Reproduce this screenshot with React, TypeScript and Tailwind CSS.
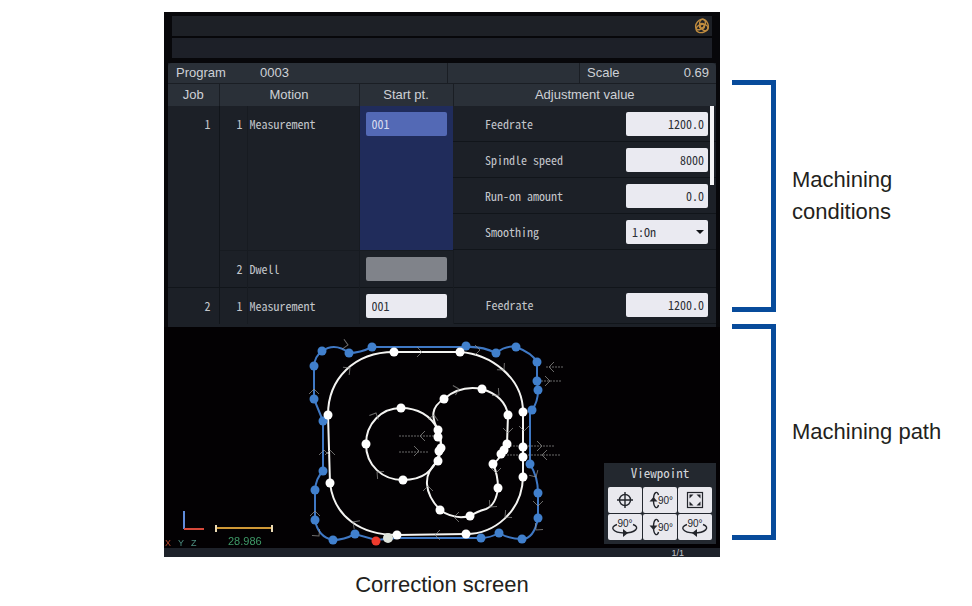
import { useState } from 'react';

interface Adjustment {
    label: string;
    value: string;
    options?: string[];
}

interface ViewButton {
    label: string;
    icon: 'center' | 'pitchUp' | 'fit' | 'yawLeft' | 'pitchDown' | 'yawRight';
}

const ADJUSTMENTS: Adjustment[] = [
    { label: 'Feedrate', value: '1200.0' },
    { label: 'Spindle speed', value: '8000' },
    { label: 'Run-on amount', value: '0.0' },
    { label: 'Smoothing', value: '1:On', options: ['1:On', '0:Off'] },
];

const VIEW_BUTTONS: ViewButton[] = [
    { label: 'Center view', icon: 'center' },
    { label: 'Tilt up', icon: 'pitchUp' },
    { label: 'Fit view', icon: 'fit' },
    { label: 'Turn left', icon: 'yawLeft' },
    { label: 'Tilt down', icon: 'pitchDown' },
    { label: 'Turn right', icon: 'yawRight' },
];

const OUTER_POINTS = [
    [158, 24], [185, 26], [208, 20], [302, 19], [332, 26], [352, 20], [373, 35], [373, 54], [374, 63], [368, 83],
    [366, 137], [374, 166], [374, 191], [358, 212], [335, 206], [317, 211], [191, 207], [169, 213], [151, 193],
    [151, 163], [159, 144], [159, 94], [150, 72], [150, 39],
];

const INNER_POINTS = [
    [230, 25], [296, 25], [359, 85], [359, 120], [359, 130], [359, 150], [302, 207], [233, 208],
    [166, 156], [164, 88], [237, 81], [202, 117], [239, 153], [280, 72], [318, 62], [344, 88], [343, 117],
    [340, 123], [337, 127], [329, 137], [334, 161], [306, 189], [276, 183], [274, 103], [274, 110],
    [277, 121], [275, 124], [274, 134],
];

// x, y, rotation of the travel direction
const ARROWS = [
    [184, 18, 10], [258, 25, 0], [186, 41, -38], [150, 62, -90], [212, 86, -65], [344, 106, 90], [360, 104, 90],
    [316, 23, 0], [295, 62, -15], [335, 68, 40], [340, 43, 48], [160, 123, -90], [166, 123, -90], [213, 145, 220],
    [151, 184, -90], [189, 195, 215], [155, 209, 50], [271, 208, 180], [264, 159, -90], [290, 190, 180],
    [326, 180, 130], [332, 146, 90], [341, 190, 140], [374, 179, 90], [372, 203, 130], [270, 88, -80],
    [372, 150, 60], [256, 109, 180], [255, 124, 0], [385, 40, 180], [386, 54, 0], [378, 119, 0], [378, 128, 180],
];

function ViewIcon({ icon }: { icon: ViewButton['icon'] }) {
    const isPitch = icon === 'pitchUp' || icon === 'pitchDown';
    const isYaw = icon === 'yawLeft' || icon === 'yawRight';

    return (
        <svg viewBox="0 0 32 24" className="h-6 w-full" fill="none" stroke="#22252b" strokeWidth="1.4" aria-hidden="true">
            {icon === 'center' && (
                <>
                    <circle cx="16" cy="12" r="5.5" />
                    <path d="M16 4v16M8 12h16" />
                </>
            )}
            {icon === 'fit' && (
                <>
                    <rect x="8.500" y="4.500" width="15" height="15" strokeWidth="1.2" />
                    <path d="M10.500 6.500h4l-4 4zM21.500 6.500h-4l4 4zM10.500 17.500h4l-4-4zM21.500 17.500h-4l4-4z" fill="#22252b" stroke="none" />
                </>
            )}
            {isPitch && (
                <>
                    <path d="M14.500 7C13.500 2.500 9.500 3.500 9.500 12s4 9.500 5 5" />
                    <path d={icon === 'pitchUp' ? 'M5.500 13.500h8l-4-4.500z' : 'M5.500 10.500h8l-4 4.500z'} fill="#22252b" stroke="none" />
                    <text x="14" y="16" fontSize="10" fill="#22252b" stroke="none" fontFamily="Liberation Sans">
                        90°
                    </text>
                </>
            )}
            {isYaw && (
                <>
                    <path d="M8 9.500C0 12 4 18 15 18s17-5.500 9-8.500" />
                    <path
                        d={icon === 'yawLeft' ? 'M14 14v8l5-4z' : 'M18 14v8l-5-4z'}
                        fill="#22252b"
                        stroke="none"
                    />
                    <text x="16" y="12" textAnchor="middle" fontSize="10" fill="#22252b" stroke="none" fontFamily="Liberation Sans">
                        90°
                    </text>
                </>
            )}
        </svg>
    );
}

function Viewpoint() {
    return (
        <div className="absolute right-1 bottom-1 w-28 bg-[#23282f]">
            <h2 className="h-5 text-center text-[13px] leading-5 text-[#d3d6db]">Viewpoint</h2>
            <div className="grid grid-cols-3 gap-px p-1">
                {VIEW_BUTTONS.map((button) => (
                    <button
                        key={button.label}
                        type="button"
                        aria-label={button.label}
                        className="h-[26px] rounded-xs bg-[#e9e9ee] hover:bg-white"
                    >
                        <ViewIcon icon={button.icon} />
                    </button>
                ))}
            </div>
        </div>
    );
}

function MachiningPath() {
    return (
        <section className="relative bg-[#030103]" aria-label="Machining path">
            <svg viewBox="0 0 556 221" className="block w-full overflow-visible" fill="none">
                <path
                    d="M158 24Q171 15 185 26Q196 26 208 20H302Q318 19 332 26Q342 18 352 20Q368 26 373 35V54L374 63Q374 75 368 83H366V137Q374 150 374 166V191Q370 212 358 212Q345 212 335 206Q326 211 317 211H233L212 213L191 207Q180 213 169 213Q154 210 151 193V163Q152 151 159 144V94L150 72V39Q151 29 158 24Z"
                    stroke="#3f78c4"
                    strokeWidth="2"
                />
                <g stroke="#f4f4f2" strokeWidth="2">
                    <path d="M230 25H296C326 27 359 50 359 85V150C358 185 330 207 302 207L233 208C197 208 170 190 166 156L164 88C164 52 190 25 230 25Z" />
                    <path d="M274 103C267 88 253 81 237 81C217 81 202 97 202 117C202 138 218 153 239 153C257 153 270 145 275 127C278 120 277 111 274 103Z" />
                    <path d="M274 103C267 90 267 80 280 72Q296 58 318 62Q341 69 344 88L343 117Q338 130 329 137Q334 148 334 161Q332 178 322 182Q312 185 306 189Q290 193 276 183C260 166 258 147 274 134C278 124 278 113 274 103Z" />
                </g>
                <g stroke="#9a9a98" strokeWidth="1" opacity="0.7">
                    <path d="M235 109h42M235 125h30M340 119h51M340 128h56M382 40h17M374 54h24" strokeDasharray="2 1" />
                    {ARROWS.map(([x, y, angle]) => (
                        <path key={`${x}-${y}`} d="M-5-5 0 0-5 5" transform={`translate(${x} ${y}) rotate(${angle})`} />
                    ))}
                </g>
                <g fill="#4180cd">
                    {OUTER_POINTS.map(([x, y]) => (
                        <circle key={`${x}-${y}`} cx={x} cy={y} r="4.500" />
                    ))}
                </g>
                <g fill="#ffffff">
                    {INNER_POINTS.map(([x, y]) => (
                        <circle key={`${x}-${y}`} cx={x} cy={y} r="4.500" />
                    ))}
                </g>
                <circle cx="224" cy="211" r="5" fill="#dfe4dc" />
                <circle cx="212" cy="214" r="4.500" fill="#ee3b2d" />

                <path d="M20 184v18" stroke="#5f8cdb" strokeWidth="2" />
                <path d="M20 202h20" stroke="#d6483a" strokeWidth="2" />
                <path d="M52 201h56" stroke="#cf9836" strokeWidth="2" />
                <path d="M52 198v7M108 198v7" stroke="#ead9b4" strokeWidth="2" />
                <g fontSize="9" fontFamily="Liberation Sans">
                    <text x="64" y="218" fill="#3f9a68" fontSize="11">28.986</text>
                    <text x="1" y="219" fill="#b5472c">X</text>
                    <text x="14" y="219" fill="#4d8d80">Y</text>
                    <text x="27" y="219" fill="#4d8d80">Z</text>
                </g>
            </svg>
            <Viewpoint />
        </section>
    );
}

function AdjustmentRow({ label, value, options, job }: Adjustment & { job: number }) {
    const id = `job-${job}-${label.toLowerCase().replace(' ', '-')}`;

    return (
        <div className="flex h-9 items-center border-b border-[#11151a] pr-2 pl-8">
            <label htmlFor={id} className="flex-1">
                {label}
            </label>
            {options ? (
                <div className="relative w-[82px]">
                    <select
                        id={id}
                        defaultValue={value}
                        className="block h-6 w-full appearance-none rounded-xs bg-[#eaeaf1] px-1.5 leading-6 text-[#2c2e35]"
                    >
                        {options.map((option) => (
                            <option key={option}>{option}</option>
                        ))}
                    </select>
                    <svg viewBox="0 0 8 4" className="pointer-events-none absolute top-2.5 right-1 w-2" aria-hidden="true">
                        <path d="M0 0h8L4 4z" fill="#111318" />
                    </svg>
                </div>
            ) : (
                <input
                    id={id}
                    defaultValue={value}
                    className="h-6 w-[82px] rounded-xs bg-[#eaeaf1] px-1 text-right text-[#2c2e35]"
                />
            )}
        </div>
    );
}

function ConditionsTable() {
    const [start, setStart] = useState('001');

    return (
        <section className="relative mx-1 bg-[#1c2027] pb-[3px]" aria-label="Machining conditions">
            <div className="flex h-[21px] items-center rounded-t-sm border-b border-[#1a1e24] bg-[#2a3038] pl-2 font-['Liberation_Sans'] text-[13px] leading-5 text-[#ced1d6]">
                <span className="w-21">Program</span>
                <span className="flex-1">0003</span>
                <span className="w-[132px] border-l border-[#1a1e24]">&nbsp;</span>
                <span className="flex w-[137px] justify-between border-l border-[#1a1e24] px-[7px]">
                    <span>Scale</span>
                    <span>0.69</span>
                </span>
            </div>
            <table className="w-full table-fixed border-collapse">
                <colgroup>
                    <col className="w-[51px]" />
                    <col className="w-7" />
                    <col className="w-[112px]" />
                    <col className="w-[94px]" />
                    <col />
                </colgroup>
                <thead className="bg-[#2a3038] font-['Liberation_Sans'] text-[13px] leading-5 text-[#ced1d6]">
                    <tr className="h-[22px]">
                        <th className="border-r border-[#1a1e24] p-0 font-normal">Job</th>
                        <th colSpan={2} className="border-r border-[#1a1e24] p-0 font-normal">Motion</th>
                        <th className="border-r border-[#1a1e24] p-0 font-normal">Start pt.</th>
                        <th className="p-0 font-normal">Adjustment value</th>
                    </tr>
                </thead>
                <tbody className="align-top leading-9">
                    <tr>
                        <td rowSpan={2} className="border-r border-[#11151a] p-0 pr-2 text-right">1</td>
                        <td className="border-r border-[#171b21] p-0 pr-1 text-right">1</td>
                        <td className="border-r border-[#171b21] p-0 pl-0.5">Measurement</td>
                        <td className="bg-[#202c5b] p-0 px-1.5 py-1.5">
                            <input
                                aria-label="Start point, job 1"
                                value={start}
                                onChange={(e) => setStart(e.target.value)}
                                className="block h-6 w-full rounded-xs bg-[#5369b5] px-1.5 text-[#d9def0]"
                            />
                        </td>
                        <td className="p-0">
                            {ADJUSTMENTS.map((item) => (
                                <AdjustmentRow key={item.label} job={1} {...item} />
                            ))}
                        </td>
                    </tr>
                    <tr className="h-9">
                        <td className="border-t border-r border-[#171b21] p-0 pr-1 text-right">2</td>
                        <td className="border-t border-r border-[#171b21] p-0 pl-0.5">Dwell</td>
                        <td className="border-t border-r border-[#171b21] p-0 px-1.5 py-1.5">
                            <input aria-label="Start point, dwell" disabled className="block h-6 w-full rounded-xs bg-[#80838a]" />
                        </td>
                        <td className="p-0" />
                    </tr>
                    <tr className="h-9 border-t border-[#11151a]">
                        <td className="border-r border-[#11151a] p-0 pr-2 text-right">2</td>
                        <td className="border-r border-[#171b21] p-0 pr-1 text-right">1</td>
                        <td className="border-r border-[#171b21] p-0 pl-0.5">Measurement</td>
                        <td className="border-r border-[#171b21] p-0 px-1.5 py-1.5">
                            <input
                                aria-label="Start point, job 2"
                                defaultValue="001"
                                className="block h-6 w-full rounded-xs bg-[#eaeaf1] px-1.5 text-[#2c2e35]"
                            />
                        </td>
                        <td className="p-0">
                            <AdjustmentRow job={2} label="Feedrate" value="1200.0" />
                        </td>
                    </tr>
                </tbody>
            </table>
            <div className="absolute top-[43px] right-0.5 h-[79px] w-1 bg-[#f4f4f6]" />
        </section>
    );
}

function Callout({ children }: { children: string }) {
    return (
        <div className="flex items-center gap-4">
            <div className="h-full w-11 shrink-0 border-y-5 border-r-5 border-[#074b9b]" />
            <p className="w-40 text-[22px] leading-8">{children}</p>
        </div>
    );
}

export default function App() {
    return (
        <main className="min-h-screen bg-white pt-3 pl-41 font-['Liberation_Sans',sans-serif] text-[#231f20]">
            <div className="flex">
                <figure className="min-w-0 flex-1">
                    <div className="bg-[#07070a] font-['Noto_Sans_CJK_JP',monospace] text-[12px] text-[#c3c6cb] [font-feature-settings:'hwid']">
                        <div className="mx-2 pt-1">
                            <div className="flex h-5 items-center justify-end bg-[#1d2026] pr-0.5">
                                <svg viewBox="0 0 16 16" className="w-4" fill="none" stroke="#c08c3f" strokeWidth="1.400" aria-hidden="true">
                                    <circle cx="8" cy="8" r="2.500" />
                                    <ellipse cx="6.500" cy="6.500" rx="6" ry="4" transform="rotate(-50 6.500 6.500)" />
                                    <ellipse cx="10" cy="7" rx="6" ry="4" transform="rotate(65 10 7)" />
                                    <ellipse cx="8" cy="10.500" rx="6" ry="4" transform="rotate(-10 8 10.500)" />
                                </svg>
                            </div>
                        </div>
                        <div className="mx-2 mt-0.5 mb-[5px] h-5 bg-[#1d2028]" />
                        <ConditionsTable />
                        <MachiningPath />
                        <div className="h-[9px] bg-[#1e222a] pr-9 text-right font-['Liberation_Sans'] text-[9px] leading-[10px]">1/1</div>
                    </div>
                    <figcaption className="pt-3 text-center text-[22px] leading-8">Correction screen</figcaption>
                </figure>
                <aside className="ml-3 grid w-60 shrink-0 grid-rows-[232px_216px] content-start gap-3 pt-17">
                    <Callout>Machining conditions</Callout>
                    <Callout>Machining path</Callout>
                </aside>
            </div>
        </main>
    );
}
